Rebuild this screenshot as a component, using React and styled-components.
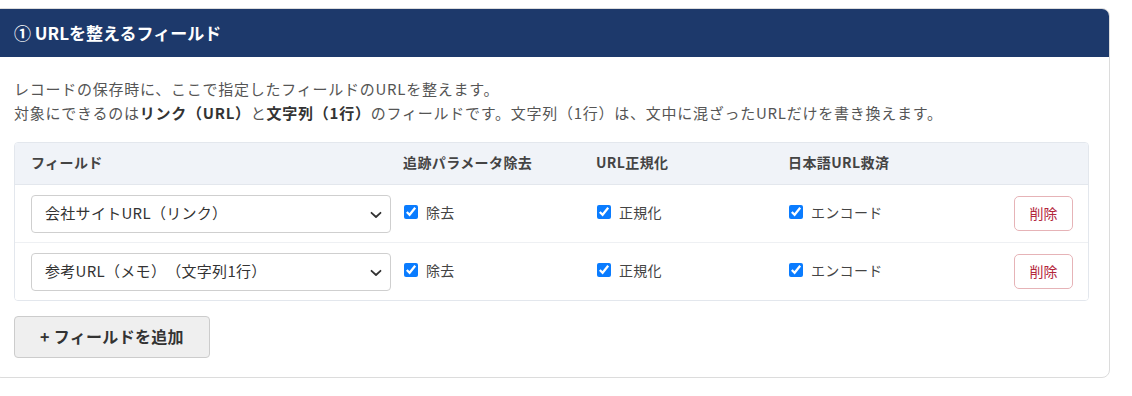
import React from "react";
import styled, { createGlobalStyle } from "styled-components";

const Global = createGlobalStyle`
  html, body { margin: 0; padding: 0; background: #fff; }
  body {
    font-family: "Noto Sans CJK JP", "Noto Sans", sans-serif;
    color: #333;
    text-spacing-trim: space-all;
  }
  select, button { text-spacing-trim: space-all; }
`;

const Page = styled.div`
  padding-top: 8px;
`;

const Card = styled.section`
  margin-left: -7px;
  width: 1117px;
  box-sizing: border-box;
  border: 1px solid #dcdcdc;
  border-radius: 8px;
  overflow: hidden;
  background: #fff;
`;

const CardHeader = styled.h2`
  margin: 0;
  height: 48px;
  display: flex;
  align-items: center;
  padding: 0 20px 1px;
  box-sizing: border-box;
  background: #1d396b;
  color: #fff;
  font-size: 17px;
  font-weight: 700;
`;

const CardBody = styled.div`
  padding: 20px 20px 19px;
`;

const Desc = styled.p`
  margin: 0 0 17px;
  font-size: 15px;
  line-height: 24px;
  color: #555;
  letter-spacing: 0.75px;
  b { color: #333; font-weight: 700; }
`;

const Table = styled.div`
  border: 1px solid #e3e7ed;
  border-radius: 4px;
  overflow: hidden;
`;

const Row = styled.div`
  display: grid;
  grid-template-columns: 360px 181px 180px 1fr auto;
  column-gap: 12px;
  align-items: center;
  padding: 0 15px 0 16px;
  height: ${(p) => (p.$head ? "41px" : "57px")};
  background: ${(p) => (p.$head ? "#f0f3f8" : "#fff")};
  border-top: ${(p) => (p.$first ? "none" : p.$afterHead ? "1px solid #e3e7ed" : "1px solid #eef0f3")};
`;

const HeadCell = styled.div`
  font-size: 14px;
  font-weight: 700;
  color: #444;
  letter-spacing: 0.4px;
  padding-bottom: 3px;
`;

const SelectWrap = styled.div`
  position: relative;
  width: 360px;
`;

const Select = styled.select`
  appearance: none;
  -webkit-appearance: none;
  width: 100%;
  height: 38px;
  box-sizing: border-box;
  border: 1px solid #cfcfcf;
  border-radius: 4px;
  background: #fff;
  padding: 0 36px 2px 13px;
  font-family: inherit;
  font-size: 15px;
  color: #333;
  letter-spacing: 0.3px;
`;

const Chevron = styled.svg`
  position: absolute;
  right: 9px;
  top: 16px;
  pointer-events: none;
`;

const CheckLabel = styled.label`
  display: flex;
  align-items: center;
  gap: 8px;
  font-size: 14px;
  color: #444;
  letter-spacing: 0.3px;
  padding-bottom: 4px;
`;

const Check = styled.input`
  width: 14px;
  height: 14px;
  margin: 0 0 0 1px;
  accent-color: #0a7cff;
`;

const DeleteButton = styled.button`
  width: 59px;
  height: 35px;
  border: 1px solid #e6b3b7;
  border-radius: 5px;
  background: #fff;
  color: #b3263b;
  font-family: inherit;
  font-size: 14px;
  padding: 0 0 2px;
`;

const AddButton = styled.button`
  margin-top: 15px;
  width: 196px;
  height: 42px;
  border: 1px solid #cccccc;
  border-radius: 4px;
  background: #efefef;
  color: #333;
  font-family: inherit;
  font-size: 16px;
  font-weight: 700;
  letter-spacing: 0.3px;
  padding: 0 0 2px;
  display: block;
`;

const rows = [
  { field: "会社サイトURL（リンク）" },
  { field: "参考URL（メモ）（文字列1行）" },
];

function FieldRow({ field, index }) {
  return (
    <Row $afterHead={index === 0}>
      <SelectWrap>
        <Select defaultValue={field}>
          <option>{field}</option>
        </Select>
        <Chevron width="12" height="8" viewBox="0 0 12 8">
          <path d="M1.5 1.8 L6 6 L10.5 1.8" fill="none" stroke="#333" strokeWidth="1.8" strokeLinecap="round" strokeLinejoin="round" />
        </Chevron>
      </SelectWrap>
      <CheckLabel>
        <Check type="checkbox" defaultChecked />
        除去
      </CheckLabel>
      <CheckLabel>
        <Check type="checkbox" defaultChecked />
        正規化
      </CheckLabel>
      <CheckLabel>
        <Check type="checkbox" defaultChecked />
        エンコード
      </CheckLabel>
      <DeleteButton>削除</DeleteButton>
    </Row>
  );
}

export default function App() {
  return (
    <Page>
      <Global />
      <Card>
        <CardHeader>① URLを整えるフィールド</CardHeader>
        <CardBody>
          <Desc>
            レコードの保存時に、ここで指定したフィールドのURLを整えます。
            <br />
            対象にできるのは<b>リンク（URL）</b>と<b>文字列（1行）</b>のフィールドです。文字列（1行）は、文中に混ざったURLだけを書き換えます。
          </Desc>
          <Table>
            <Row $head $first>
              <HeadCell>フィールド</HeadCell>
              <HeadCell>追跡パラメータ除去</HeadCell>
              <HeadCell>URL正規化</HeadCell>
              <HeadCell>日本語URL救済</HeadCell>
              <div />
            </Row>
            {rows.map((r, i) => (
              <FieldRow key={i} index={i} field={r.field} />
            ))}
          </Table>
          <AddButton>+ フィールドを追加</AddButton>
        </CardBody>
      </Card>
    </Page>
  );
}
